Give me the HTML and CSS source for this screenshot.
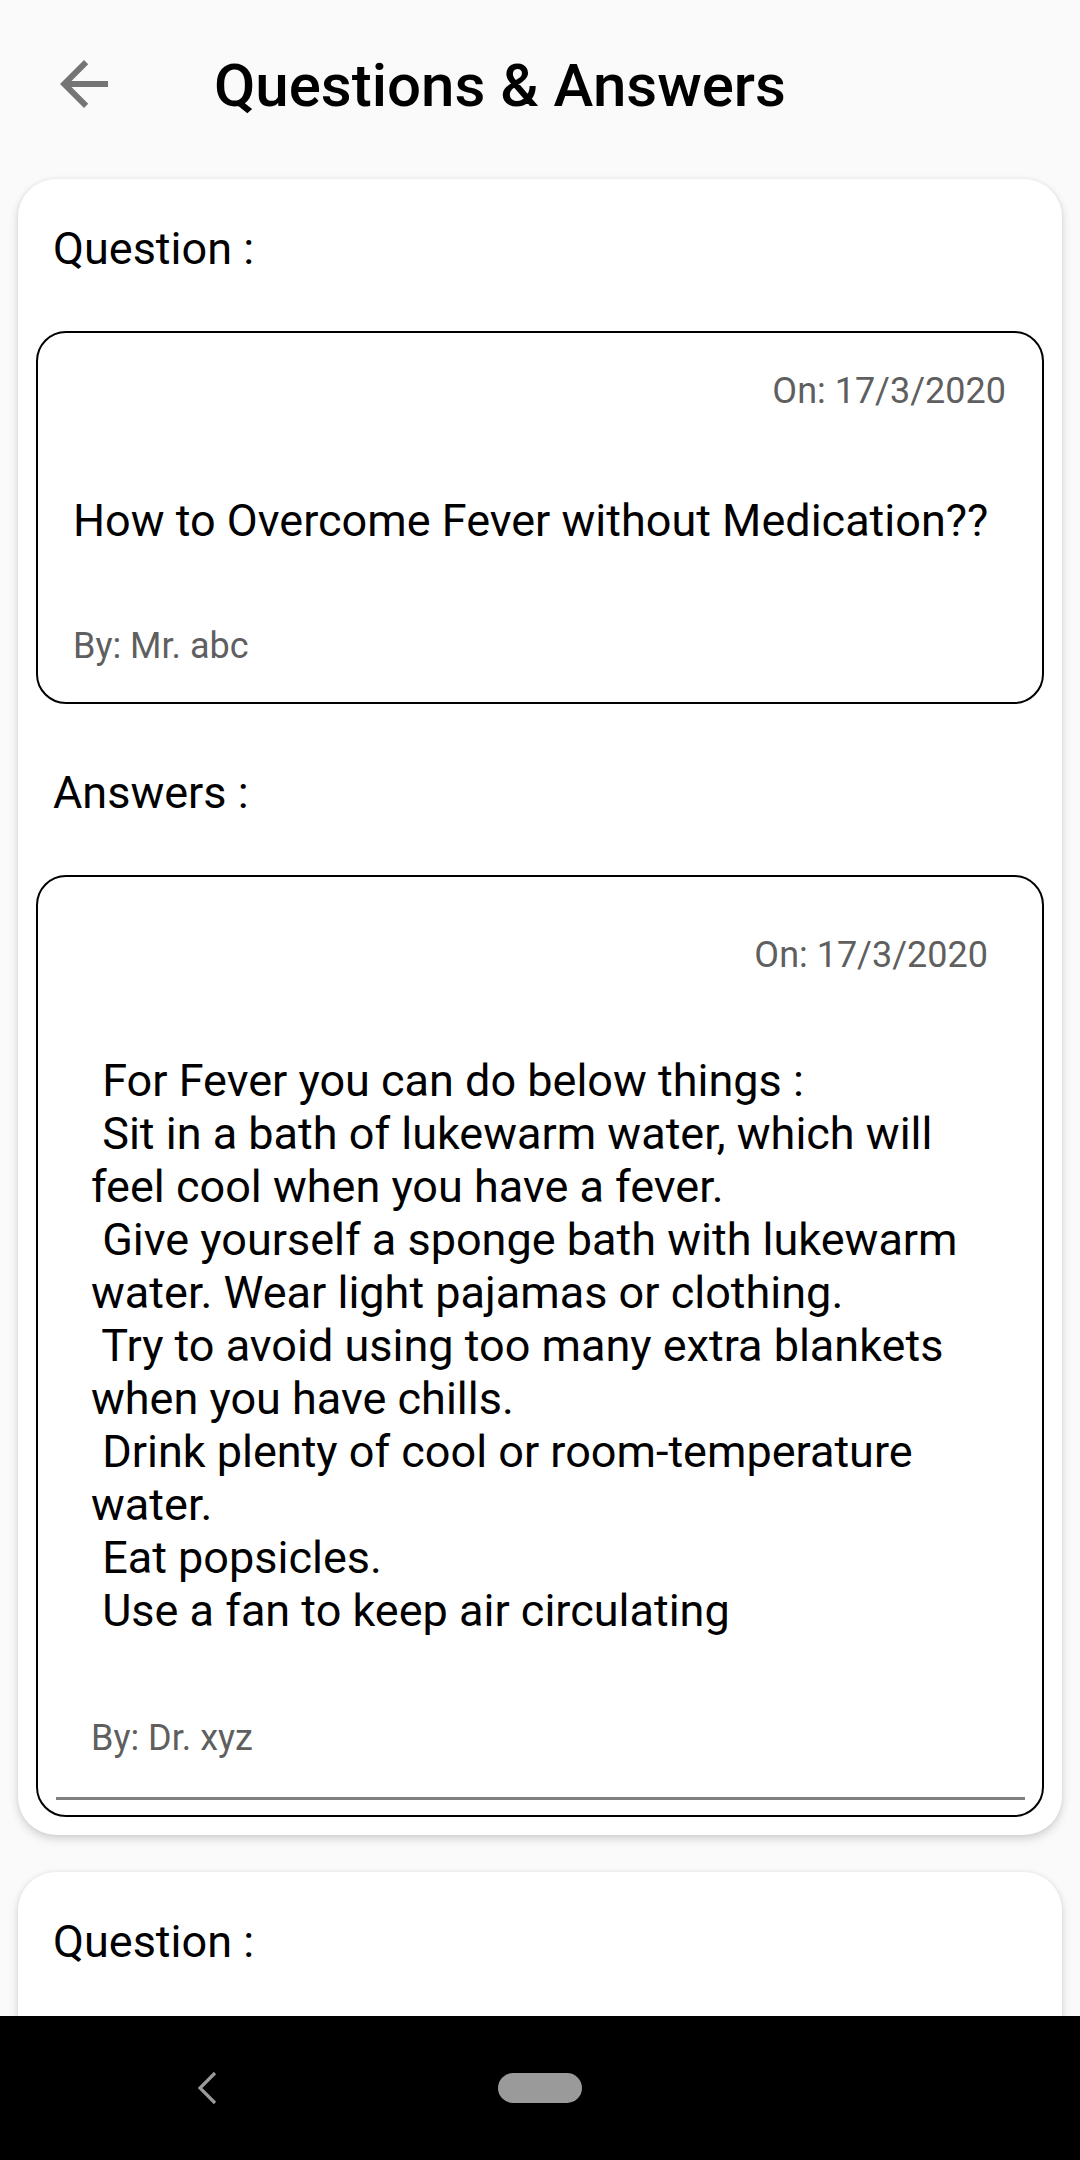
FILE: index.html
```html
<!DOCTYPE html>
<html lang="en">
<head>
<meta charset="utf-8">
<title>Questions &amp; Answers</title>
<link rel="stylesheet" href="styles.css">
</head>
<body>
<div class="screen">
  <header class="toolbar">
    <svg class="back" viewBox="0 0 24 24" width="72" height="72" aria-hidden="true">
      <path d="M20 11H7.83l5.59-5.59L12 4l-8 8 8 8 1.41-1.41L7.83 13H20v-2z" fill="#757575"/>
    </svg>
    <h1 class="title">Questions &amp; Answers</h1>
  </header>
  <main class="list">
    <section class="card">
      <p class="label">Question :</p>
      <div class="box qbox">
        <p class="date">On: 17/3/2020</p>
        <p class="qtext">How to Overcome Fever without Medication??</p>
        <p class="by">By: Mr. abc</p>
      </div>
      <p class="label label-gap">Answers :</p>
      <div class="box abox">
        <p class="date">On: 17/3/2020</p>
        <p class="atext"> For Fever you can do below things :
 Sit in a bath of lukewarm water, which will
feel cool when you have a fever.
 Give yourself a sponge bath with lukewarm
water. Wear light pajamas or clothing.
 Try to avoid using too many extra blankets
when you have chills.
 Drink plenty of cool or room-temperature
water.
 Eat popsicles.
 Use a fan to keep air circulating</p>
        <p class="by by-answer">By: Dr. xyz</p>
        <div class="divider"></div>
      </div>
    </section>
    <section class="card card-next">
      <p class="label">Question :</p>
    </section>
  </main>
  <nav class="navbar">
    <svg class="nav-back" viewBox="0 0 22 34" width="22" height="34" aria-hidden="true">
      <path d="M19 2 L4 17 L19 32" fill="none" stroke="#9a9a9a" stroke-width="3.2"/>
    </svg>
    <span class="pill"></span>
  </nav>
</div>
</body>
</html>
```

FILE: styles.css
```css
* { box-sizing: border-box; }
html, body {
  margin: 0;
  padding: 0;
  background: #fafafa;
}
body {
  font-family: Roboto, "Liberation Sans", Arial, sans-serif;
  color: #000;
}
.screen {
  width: 1080px;
  height: 2160px;
  display: flex;
  flex-direction: column;
  overflow: hidden;
  background: #fafafa;
}
.toolbar {
  height: 168px;
  flex: 0 0 168px;
  display: flex;
  align-items: center;
  padding-left: 48px;
}
.back { display: block; flex: 0 0 72px; }
.title {
  margin: 0 0 0 94px;
  padding-top: 4px;
  font-size: 60px;
  font-weight: 500;
  line-height: 70px;
  color: #000;
  letter-spacing: 0;
}
.list {
  flex: 1 1 auto;
  overflow: hidden;
  padding-top: 11px;
}
.card {
  margin: 0 18px;
  background: #fff;
  border-radius: 38px;
  padding: 45px 18px 18px;
  box-shadow: 0 4px 10px rgba(0,0,0,0.16), 0 0 4px rgba(0,0,0,0.06);
}
.card-next {
  margin-top: 37px;
  height: 400px;
}
.label {
  margin: 0;
  padding-left: 17px;
  font-size: 45px;
  line-height: 49px;
}
.label-gap { margin-top: 64px; }
.box {
  border: 2px solid #000;
  border-radius: 30px;
  margin-top: 58px;
}
.qbox { padding: 38px 36px 35px 35px; }
.abox { padding: 58px 54px 15px 53px; }
.date {
  margin: 0;
  text-align: right;
  font-size: 36px;
  line-height: 41px;
  color: #5f5f5f;
}
.qtext {
  margin: 84px 0 0;
  font-size: 45px;
  line-height: 49px;
}
.by {
  margin: 81px 0 0;
  font-size: 36px;
  line-height: 41px;
  color: #5f5f5f;
}
.atext {
  margin: 78px 0 0;
  font-size: 45px;
  line-height: 53px;
  white-space: pre;
}
.by-answer { margin-top: 81px; }
.divider {
  margin: 38px -37px 0 -35px;
  height: 3px;
  background: #808080;
}
.navbar {
  flex: 0 0 144px;
  height: 144px;
  background: #000;
  display: flex;
  align-items: center;
  padding-left: 196px;
}
.nav-back { display: block; }
.pill {
  display: block;
  width: 84px;
  height: 30px;
  border-radius: 15px;
  background: #9a9a9a;
  margin-left: 280px;
}
```
